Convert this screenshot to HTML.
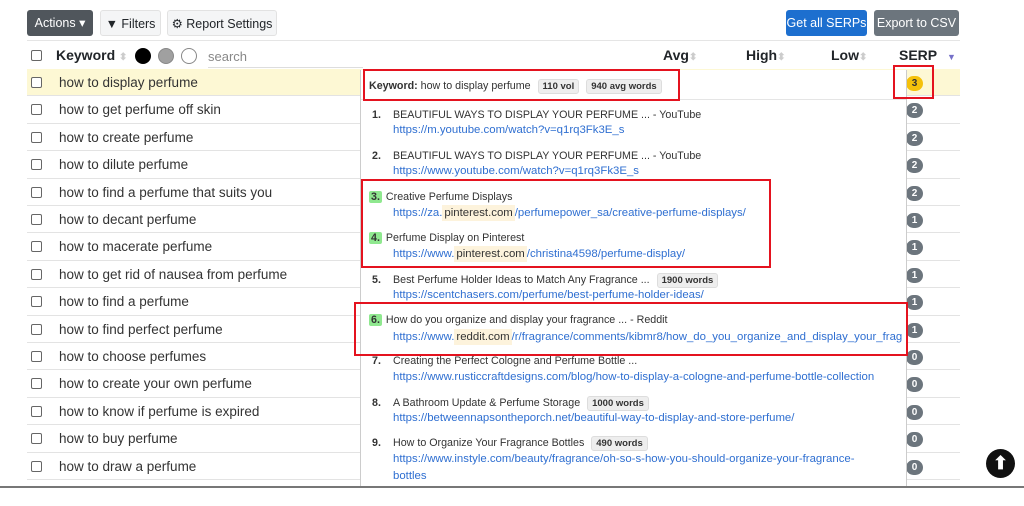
<!DOCTYPE html>
<html><head><meta charset="utf-8"><style>
*{margin:0;padding:0;box-sizing:border-box}
body{width:1024px;height:506px;background:#fff;font-family:"Liberation Sans",sans-serif;color:#212529;position:relative;overflow:hidden}
.a{position:absolute}
.btn{position:absolute;top:10px;height:26px;border-radius:3px;font-size:12.5px;line-height:26px;text-align:center}
.row{position:absolute;left:27px;width:933px;height:27.4px;border-bottom:1px solid #e3e3e3}
.cb{position:absolute;left:4px;top:8px;width:11px;height:11px;border:1px solid #666;border-radius:2px;background:#fff}
.kw{position:absolute;left:32px;top:6px;font-size:13.5px;color:#333}
.bd{position:absolute;left:879px;top:7px;width:17px;height:15px;border-radius:8px;background:#6c757d;color:#fff;font-size:10px;font-weight:bold;text-align:center;line-height:15px}
.pop{position:absolute;left:360px;top:70px;width:547px;height:417px;background:#fff;border-left:1px solid #ccc;border-right:1px solid #ccc;overflow:hidden}
.it{position:absolute;left:11px;font-size:10.7px;color:#333;white-space:nowrap}
.num{display:inline-block;width:21px;font-weight:bold}
.gn{background:#8fe88f;border-radius:2px;padding:0 2px;margin-left:-3px;width:auto;margin-right:4px}
.u{position:absolute;left:32px;font-size:11.4px;color:#2f6fd1;white-space:nowrap}
.hl{background:#fdf3dc;color:#333;padding:2px 2px}
.tag{display:inline-block;background:#eee;border:1px solid #ddd;border-radius:3px;font-size:9.5px;font-weight:bold;padding:1px 4px;color:#333;margin-left:4px}
.red{position:absolute;border:2.5px solid #e4131f}
</style></head><body>
<div class="btn" style="left:27px;width:66px;background:#50565c;color:#fff">Actions ▾</div>
<div class="btn" style="left:100px;width:61px;background:#f4f5f6;border:1px solid #e2e2e2">▼ Filters</div>
<div class="btn" style="left:167px;width:110px;background:#f4f5f6;border:1px solid #e2e2e2">⚙ Report Settings</div>
<div class="btn" style="left:786px;width:81px;background:#1d6fcf;color:#fff">Get all SERPs</div>
<div class="btn" style="left:874px;width:85px;background:#6c757d;color:#fff">Export to CSV</div>
<div class="a" style="left:27px;top:40px;width:933px;border-top:1px solid #e5e5e5"></div>
<div class="a" style="left:31px;top:50px;width:11px;height:11px;border:1px solid #666;border-radius:2px"></div>
<div class="a" style="left:56px;top:47px;font-size:14px;font-weight:bold">Keyword <span style="color:#ccc;font-size:10px">⬍</span></div>
<div class="a" style="left:135px;top:48px;width:16px;height:16px;border-radius:50%;background:#000"></div>
<div class="a" style="left:158px;top:48px;width:16px;height:16px;border-radius:50%;background:#a0a0a0;border:1px solid #888"></div>
<div class="a" style="left:181px;top:48px;width:16px;height:16px;border-radius:50%;border:1px solid #888"></div>
<div class="a" style="left:208px;top:49px;font-size:13px;color:#888">search</div>
<div class="a" style="left:208px;top:67px;width:155px;border-top:1px solid #ddd"></div>
<div class="a" style="left:663px;top:47px;font-size:14px;font-weight:bold">Avg<span style="color:#ccc;font-size:10px">⬍</span></div>
<div class="a" style="left:746px;top:47px;font-size:14px;font-weight:bold">High<span style="color:#ccc;font-size:10px">⬍</span></div>
<div class="a" style="left:831px;top:47px;font-size:14px;font-weight:bold">Low<span style="color:#ccc;font-size:10px">⬍</span></div>
<div class="a" style="left:899px;top:47px;font-size:14px;font-weight:bold">SERP</div>
<div class="a" style="left:947px;top:52px;font-size:9px;color:#7570c8">▼</div>

<div class="row" style="top:69px;background:#fdf8d4"><div class="cb"></div><div class="kw">how to display perfume</div><div class="bd" style="background:#f5c10b;color:#333">3</div></div>
<div class="row" style="top:96.4px"><div class="cb"></div><div class="kw">how to get perfume off skin</div><div class="bd">2</div></div>
<div class="row" style="top:123.8px"><div class="cb"></div><div class="kw">how to create perfume</div><div class="bd">2</div></div>
<div class="row" style="top:151.2px"><div class="cb"></div><div class="kw">how to dilute perfume</div><div class="bd">2</div></div>
<div class="row" style="top:178.6px"><div class="cb"></div><div class="kw">how to find a perfume that suits you</div><div class="bd">2</div></div>
<div class="row" style="top:206px"><div class="cb"></div><div class="kw">how to decant perfume</div><div class="bd">1</div></div>
<div class="row" style="top:233.4px"><div class="cb"></div><div class="kw">how to macerate perfume</div><div class="bd">1</div></div>
<div class="row" style="top:260.8px"><div class="cb"></div><div class="kw">how to get rid of nausea from perfume</div><div class="bd">1</div></div>
<div class="row" style="top:288.2px"><div class="cb"></div><div class="kw">how to find a perfume</div><div class="bd">1</div></div>
<div class="row" style="top:315.6px"><div class="cb"></div><div class="kw">how to find perfect perfume</div><div class="bd">1</div></div>
<div class="row" style="top:343px"><div class="cb"></div><div class="kw">how to choose perfumes</div><div class="bd">0</div></div>
<div class="row" style="top:370.4px"><div class="cb"></div><div class="kw">how to create your own perfume</div><div class="bd">0</div></div>
<div class="row" style="top:397.8px"><div class="cb"></div><div class="kw">how to know if perfume is expired</div><div class="bd">0</div></div>
<div class="row" style="top:425.2px"><div class="cb"></div><div class="kw">how to buy perfume</div><div class="bd">0</div></div>
<div class="row" style="top:452.6px"><div class="cb"></div><div class="kw">how to draw a perfume</div><div class="bd">0</div></div>

<div class="pop">
<div class="it" style="top:9px;left:8px"><b>Keyword:</b> how to display perfume <span class="tag">110 vol</span> <span class="tag">940 avg words</span></div>
<div class="a" style="left:0;top:29px;width:545px;border-top:1px solid #e5e5e5"></div>
<div class="it" style="top:39px"><span class="num">1.</span>BEAUTIFUL WAYS TO DISPLAY YOUR PERFUME ... - YouTube</div>
<div class="u" style="top:54px">https://m.youtube.com/watch?v=q1rq3Fk3E_s</div>
<div class="it" style="top:80px"><span class="num">2.</span>BEAUTIFUL WAYS TO DISPLAY YOUR PERFUME ... - YouTube</div>
<div class="u" style="top:95px">https://www.youtube.com/watch?v=q1rq3Fk3E_s</div>
<div class="it" style="top:121px"><span class="num gn">3.</span>Creative Perfume Displays</div>
<div class="u" style="top:137px">https://za.<span class="hl">pinterest.com</span>/perfumepower_sa/creative-perfume-displays/</div>
<div class="it" style="top:162px"><span class="num gn">4.</span>Perfume Display on Pinterest</div>
<div class="u" style="top:178px">https://www.<span class="hl">pinterest.com</span>/christina4598/perfume-display/</div>
<div class="it" style="top:203px"><span class="num">5.</span>Best Perfume Holder Ideas to Match Any Fragrance ... <span class="tag">1900 words</span></div>
<div class="u" style="top:219px">https://scentchasers.com/perfume/best-perfume-holder-ideas/</div>
<div class="it" style="top:244px"><span class="num gn">6.</span>How do you organize and display your fragrance ... - Reddit</div>
<div class="u" style="top:261px">https://www.<span class="hl">reddit.com</span>/r/fragrance/comments/kibmr8/how_do_you_organize_and_display_your_frag</div>
<div class="it" style="top:285px"><span class="num">7.</span>Creating the Perfect Cologne and Perfume Bottle ...</div>
<div class="u" style="top:301px">https://www.rusticcraftdesigns.com/blog/how-to-display-a-cologne-and-perfume-bottle-collection</div>
<div class="it" style="top:326px"><span class="num">8.</span>A Bathroom Update &amp; Perfume Storage <span class="tag">1000 words</span></div>
<div class="u" style="top:342px">https://betweennapsontheporch.net/beautiful-way-to-display-and-store-perfume/</div>
<div class="it" style="top:366px"><span class="num">9.</span>How to Organize Your Fragrance Bottles <span class="tag">490 words</span></div>
<div class="u" style="top:383px">https://www.instyle.com/beauty/fragrance/oh-so-s-how-you-should-organize-your-fragrance-</div>
<div class="u" style="top:400px">bottles</div>
</div>

<div class="red" style="left:363px;top:69px;width:317px;height:32px"></div>
<div class="red" style="left:893px;top:65px;width:41px;height:34px"></div>
<div class="red" style="left:361px;top:179px;width:410px;height:89px"></div>
<div class="red" style="left:354px;top:302px;width:554px;height:54px"></div>

<div class="a" style="left:0;top:486px;width:1024px;border-top:2px solid #777"></div>
<div class="a" style="left:986px;top:449px;width:29px;height:29px;border-radius:50%;background:#111;color:#fff;text-align:center;font-size:18px;line-height:28px;font-weight:bold">⬆</div>
</body></html>
